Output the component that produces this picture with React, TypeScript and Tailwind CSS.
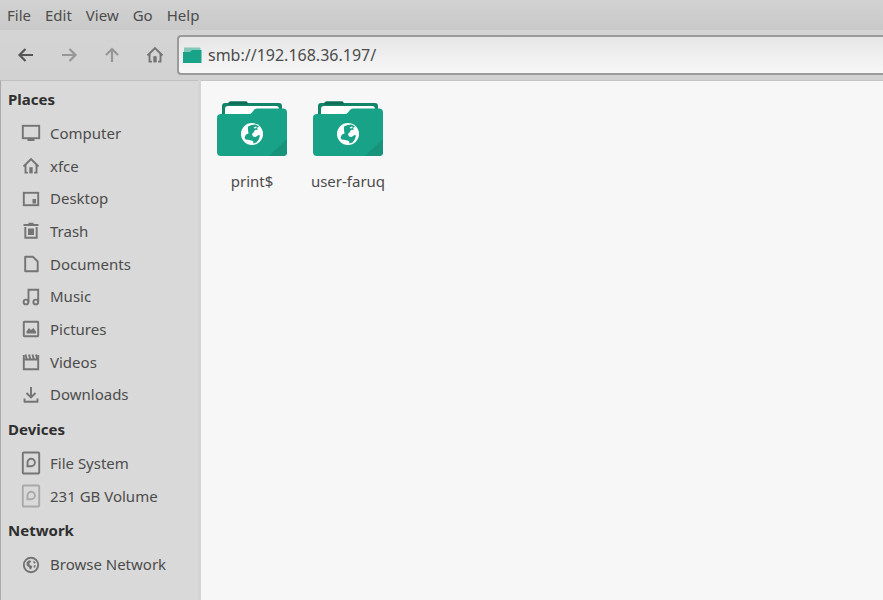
import type { ReactNode } from "react";

type IconProps = { children: ReactNode; dim?: boolean };

function Glyph({ children, dim }: IconProps) {
  return (
    <svg
      aria-hidden="true"
      width="20"
      height="24"
      viewBox="0 0 20 24"
      fill="none"
      stroke="currentColor"
      strokeWidth="1.9"
      className={dim ? "shrink-0 text-[#a9a9a9]" : "shrink-0 text-[#747474]"}
    >
      {children}
    </svg>
  );
}

const HOUSE = (
  <>
    <path d="M2.500 12.500 10 5l7.500 7.500" />
    <path d="M4.500 11v7.600h2.400M15.500 11v7.600h-2.400" />
    <path d="M8.300 13.200h3.400v6.200H8.300z" fill="currentColor" stroke="none" />
  </>
);

const DISK = (
  <>
    <rect x="1.800" y="1.500" width="16.400" height="21" rx="1" />
    <path d="M5.500 15.200h4.700a3.700 3.700 0 1 0-3.700-3.700v3.700" />
  </>
);

const places = [
  {
    label: "Computer",
    icon: (
      <>
        <rect x="1.800" y="4.800" width="16.400" height="12.400" />
        <path d="M6.500 19h7" strokeWidth="2" />
      </>
    ),
  },
  { label: "xfce", icon: HOUSE },
  {
    label: "Desktop",
    icon: (
      <>
        <rect x="2.800" y="5.800" width="14.400" height="12.400" />
        <path d="M11.500 12h3.500v4.500h-3.500z" fill="currentColor" stroke="none" />
      </>
    ),
  },
  {
    label: "Trash",
    icon: (
      <>
        <path d="M2.500 6h15M7.500 4.800h5" />
        <path d="M4.300 8v10.700h11.400V8" />
        <path d="M7 9.500h6v6.500H7z" fill="currentColor" stroke="none" />
      </>
    ),
  },
  { label: "Documents", icon: <path d="M4.200 4.800h7.800l4.700 4.700v9.700H4.200z" strokeLinejoin="round" /> },
  {
    label: "Music",
    icon: (
      <>
        <path d="M7.500 17V4.800h9.700V16.500" />
        <circle cx="5" cy="17" r="2.400" />
        <circle cx="14.800" cy="17" r="2.400" />
      </>
    ),
  },
  {
    label: "Pictures",
    icon: (
      <>
        <rect x="2.800" y="4.800" width="14.400" height="14.400" rx="0.500" />
        <path d="M5.500 16.500v-2l2.500-3.500 2 2 2.500-2 2.500 3.500v2z" fill="currentColor" stroke="none" />
      </>
    ),
  },
  {
    label: "Videos",
    icon: (
      <>
        <path d="M2.800 5v14.200h14.400V5M2.800 9.500h14.400" />
        <path d="m4.500 4.500 1.300 5M8 4.500l1.300 5M11.500 4.500l1.300 5M15 4.500l1.300 5" />
      </>
    ),
  },
  {
    label: "Downloads",
    icon: (
      <>
        <path d="M10 4v10.500M5.500 10l4.500 4.500 4.500-4.500" />
        <path d="M3.500 15.500v3.200h13v-3.200" strokeLinejoin="round" />
      </>
    ),
  },
];

const devices = [
  { label: "File System", icon: DISK },
  { label: "231 GB Volume", icon: DISK, dim: true },
];

const network = [
  {
    label: "Browse Network",
    icon: (
      <>
        <circle cx="10" cy="12" r="7.200" />
        <path
          d="M5.500 9.500 8 7.300l2.300.7-1.300 2-1 .8 1.200 1.500 2 .7-.4 2.200-1.800 1.500-1-2.500-2.300-1.800zM12.500 7.500l2.300 2-1 1.200-1.500-1zM12.800 12.300l2.200.3-1 2.200-1.500-.5z"
          fill="currentColor"
          stroke="none"
        />
      </>
    ),
  },
];

type Item = { label: string; icon: ReactNode; dim?: boolean };

function Section({ title, items, rows }: { title: string; items: Item[]; rows: string }) {
  return (
    <section>
      <h2 className="h-9 px-[7px] text-[15px] leading-9 font-bold text-[#2f2f2f]">{title}</h2>
      <ul className={`grid auto-rows-fr ${rows}`}>
        {items.map((item) => (
          <li key={item.label} className="flex">
            <a href="#" className="flex w-full items-center gap-[9px] pl-5">
              <Glyph dim={item.dim}>{item.icon}</Glyph>
              <span>{item.label}</span>
            </a>
          </li>
        ))}
      </ul>
    </section>
  );
}

function ToolButton({ label, disabled, children }: { label: string; disabled?: boolean; children: ReactNode }) {
  return (
    <button
      type="button"
      aria-label={label}
      disabled={disabled}
      className="flex h-8 w-[43px] items-center justify-center text-[#555] disabled:text-[#979797]"
    >
      <svg aria-hidden="true" width="20" height="24" viewBox="0 0 20 24" fill="none" stroke="currentColor" strokeWidth="2.200">
        {children}
      </svg>
    </button>
  );
}

function SharedFolder({ name }: { name: string }) {
  return (
    <button type="button" className="flex w-24 flex-col items-center">
      <svg aria-hidden="true" width="70" height="56" viewBox="0 0 70 56">
        <path d="M5 14V5q0-3 3-3h3l1.500-1.500h17L31 2h31q3 0 3 3v9z" fill="#148468" />
        <path d="M12 2 13.500.5h16L31 3.500H11z" fill="#0f6c56" />
        <path d="M8 14V8q0-3 3-3h48q3 0 3 3v6z" fill="#fff" />
        <path d="M0 17q0-4 4-4h28q2 0 3-1.500L37 9q1-1.500 3-1.500h26q4 0 4 4V51q0 4-4 4H4q-4 0-4-4z" fill="#18a388" />
        <path d="M70 38v13q0 4-4 4H52z" fill="#16937a" />
        <circle cx="35" cy="33" r="11" fill="#fff" />
        <path
          d="m31 25.500 3.500-1.500 4-.5 3.500 2-2 1.500 1 1.500-3 .5-1.500 2.500-1.500 1.500 1 2.500 2.500.5 3-2 1.500.5-1 3.500-2.500 3.500-3 1-.5-2.500-3.500-1-4-.5-1-2 1.500-3 2.500-1-.5-3.500z"
          fill="#18a388"
        />
        <path d="m36.500 27 2-1.500 1.500.5-1.500 1.500z" fill="#fff" />
      </svg>
      <span className="mt-3 text-[15px] leading-6">{name}</span>
    </button>
  );
}

export default function App() {
  return (
    <div className="flex min-h-screen flex-col overflow-hidden bg-[#d5d5d5] font-['Noto_Sans',sans-serif] text-[15px] text-[#4c4c4c]">
      <nav aria-label="Menu" className="flex h-[30px] items-center gap-3.5 bg-linear-to-b from-[#d2d2d2] to-[#c9c9c9] px-[7px]">
        {["File", "Edit", "View", "Go", "Help"].map((label) => (
          <button key={label} type="button" className="leading-[30px]">
            {label}
          </button>
        ))}
      </nav>

      <div className="flex h-[50px] items-center bg-linear-to-b from-[#d4d4d4] to-[#d2d2d2] pl-1">
        <ToolButton label="Back">
          <path d="M17 12H4M9.500 6 3.500 12l6 6" />
        </ToolButton>
        <ToolButton label="Forward" disabled>
          <path d="M3 12h13M10.500 6l6 6-6 6" />
        </ToolButton>
        <ToolButton label="Open parent" disabled>
          <path d="M10 19V6M4 12l6-6 6 6" />
        </ToolButton>
        <ToolButton label="Home">
          <g strokeWidth="1.900" stroke="#747474" color="#747474">
            {HOUSE}
          </g>
        </ToolButton>
        <label className="ml-px flex h-10 flex-1 items-center gap-1.5 rounded-l border-2 border-r-0 border-[#9b9b9b] bg-linear-to-b from-[#e6e6e6] to-[#f7f7f7] pl-1">
          <svg aria-hidden="true" width="19" height="17" viewBox="0 0 19 17" className="shrink-0">
            <path d="M1 5V.5h15.500q1 0 1 1V5z" fill="#83c7b8" />
            <path d="M0 5h7l2-2h9.500V15.500q0 .5-.5.500H.5q-.5 0-.5-.5z" fill="#18a388" />
          </svg>
          <input
            type="text"
            aria-label="Location"
            defaultValue="smb://192.168.36.197/"
            className="w-full min-w-0 bg-transparent text-base outline-none"
          />
        </label>
      </div>

      <div className="flex flex-1">
        <aside className="w-[198px] shrink-0 border-t border-l border-t-[#c0c0c0] border-l-[#ababab] bg-[#d9d9d9]">
          <Section title="Places" items={places} rows="h-[294px]" />
          <Section title="Devices" items={devices} rows="h-[65px]" />
          <Section title="Network" items={network} rows="h-[33px]" />
        </aside>
        <div className="w-[3px] shrink-0 bg-[#d4d4d4]" />
        <main className="flex flex-1 items-start border-t border-[#c4c4c4] bg-[#f7f7f7] pt-5 pl-[3px]">
          <SharedFolder name="print$" />
          <SharedFolder name="user-faruq" />
        </main>
      </div>
    </div>
  );
}
